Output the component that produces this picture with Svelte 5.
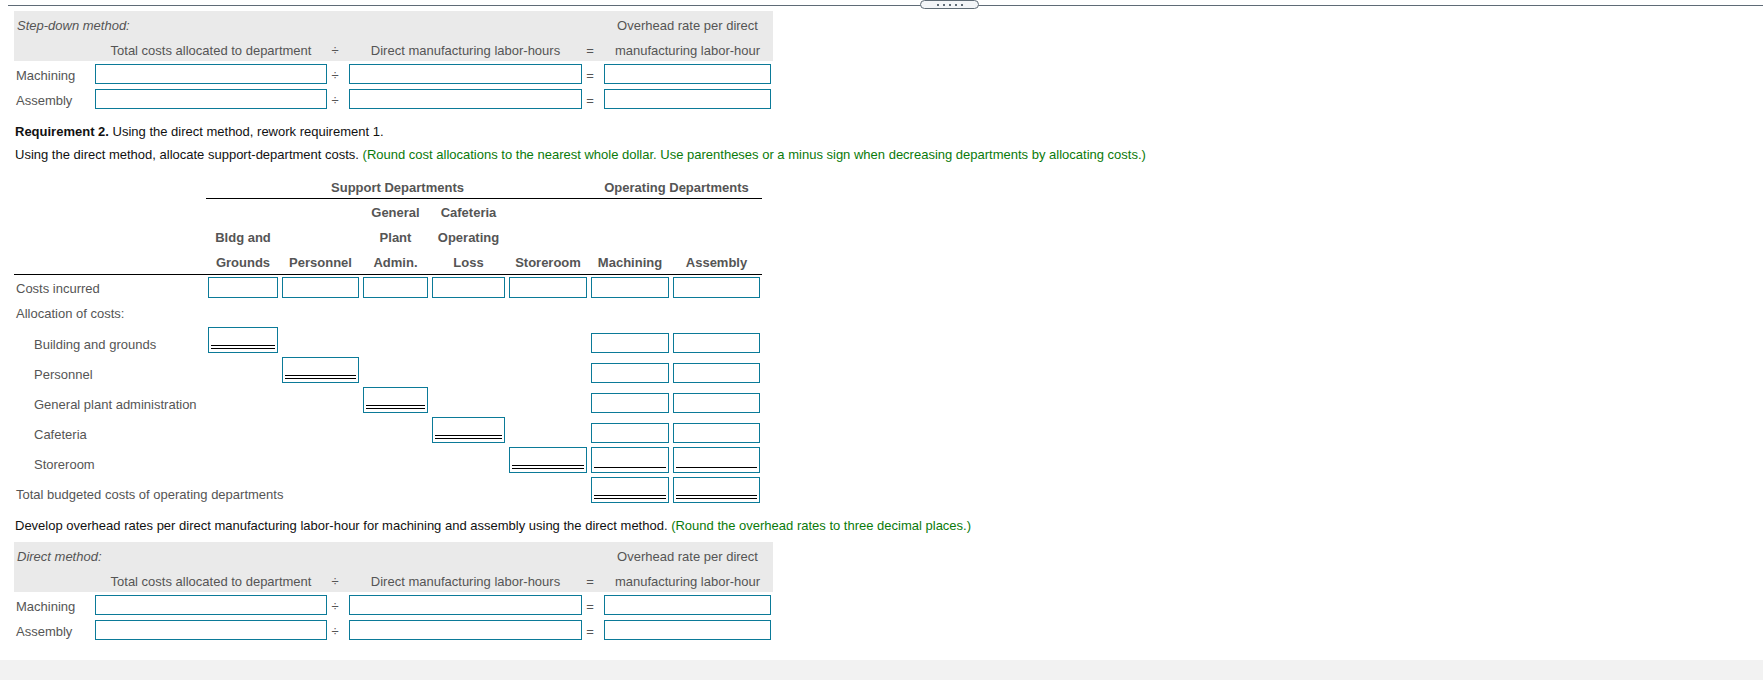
<script lang="ts">
	const rateRows = [
		{ name: 'Machining' },
		{ name: 'Assembly' }
	];

	// rule: '' plain box, 'single' subtotal line, 'double' total line
	const allocRows = [
		{ label: 'Building and grounds', own: 0, rule: 'double', opRule: '' },
		{ label: 'Personnel', own: 1, rule: 'double', opRule: '' },
		{ label: 'General plant administration', own: 2, rule: 'double', opRule: '' },
		{ label: 'Cafeteria', own: 3, rule: 'double', opRule: '' },
		{ label: 'Storeroom', own: 4, rule: 'double', opRule: 'single' }
	];

	const columns = [
		['', 'Bldg and', 'Grounds'],
		['', '', 'Personnel'],
		['General', 'Plant', 'Admin.'],
		['Cafeteria', 'Operating', 'Loss'],
		['', '', 'Storeroom'],
		['', '', 'Machining'],
		['', '', 'Assembly']
	];
</script>

{#snippet rateTable(title: string)}
	<div class="rate-table">
		<div class="rate-head">
			<div class="rate-title">{title}</div>
			<div class="center">Overhead rate per direct</div>
			<div></div>
			<div class="center">Total costs allocated to department</div>
			<div class="center op">÷</div>
			<div class="center">Direct manufacturing labor-hours</div>
			<div class="center op">=</div>
			<div class="center">manufacturing labor-hour</div>
		</div>
		{#each rateRows as row}
			<div class="rate-row">
				<div class="label">{row.name}</div>
				<input class="box rate-input" type="text" />
				<div class="center op">÷</div>
				<input class="box rate-input" type="text" />
				<div class="center op">=</div>
				<input class="box rate-input" type="text" />
			</div>
		{/each}
	</div>
{/snippet}

{#snippet ruledBox(rule: string)}
	<div class="box ruled">
		<input type="text" />
		<span class="rule {rule}"></span>
	</div>
{/snippet}

<div class="page">
	<div class="divider">
		<div class="pill">
			<i></i><i></i><i></i><i></i><i></i>
		</div>
	</div>

	{@render rateTable('Step-down method:')}

	<p class="req first"><b>Requirement 2.</b> Using the direct method, rework requirement 1.</p>
	<p class="req">
		Using the direct method, allocate support-department costs.
		<span class="hint">(Round cost allocations to the nearest whole dollar. Use parentheses or a minus sign when decreasing departments by allocating costs.)</span>
	</p>

	<div class="alloc">
		<div class="group-row">
			<div class="group support">Support Departments</div>
			<div class="group operating">Operating Departments</div>
		</div>

		<div class="head-row">
			<div></div>
			{#each columns as col}
				<div class="head-cell">
					{#each col as line}
						<div class="head-line">{line}</div>
					{/each}
				</div>
			{/each}
		</div>

		<div class="alloc-row short">
			<div class="label">Costs incurred</div>
			{#each columns as _}
				<input class="box cost-input" type="text" />
			{/each}
		</div>

		<div class="alloc-row short">
			<div class="label">Allocation of costs:</div>
		</div>

		{#each allocRows as row}
			<div class="alloc-row tall">
				<div class="label indent">{row.label}</div>
				{#each [0, 1, 2, 3, 4] as col}
					{#if col === row.own}
						<div class="slot">{@render ruledBox(row.rule)}</div>
					{:else}
						<div></div>
					{/if}
				{/each}
				{#each [5, 6] as _}
					{#if row.opRule}
						<div class="slot">{@render ruledBox(row.opRule)}</div>
					{:else}
						<div class="slot"><input class="box op-input" type="text" /></div>
					{/if}
				{/each}
			</div>
		{/each}

		<div class="alloc-row tall">
			<div class="label total">Total budgeted costs of operating departments</div>
			<div class="slot op-col1">{@render ruledBox('double')}</div>
			<div class="slot">{@render ruledBox('double')}</div>
		</div>
	</div>

	<p class="req develop">
		Develop overhead rates per direct manufacturing labor-hour for machining and assembly using the direct method.
		<span class="hint">(Round the overhead rates to three decimal places.)</span>
	</p>

	{@render rateTable('Direct method:')}

	<div class="footer-band"></div>
</div>

<style>
	:global(body) {
		background: #fff;
	}

	.page {
		font-family: 'Liberation Sans', Arial, sans-serif;
		font-size: 13px;
		color: #555;
		position: relative;
		height: 680px;
		overflow: hidden;
	}

	.divider {
		margin: 5px 0 0 8px;
		height: 5px;
		border-top: 1px solid #5f6b76;
	}

	.pill {
		position: absolute;
		top: 0;
		left: 920px;
		width: 59px;
		height: 9px;
		box-sizing: border-box;
		background: #f3f5f8;
		border: 1px solid #5f6b76;
		border-radius: 5px;
		display: flex;
		align-items: center;
		justify-content: center;
		gap: 4px;
	}

	.pill i {
		width: 2px;
		height: 2px;
		background: #5f6b76;
	}

	.rate-table {
		margin-left: 14px;
		width: 759px;
	}

	.rate-head,
	.rate-row {
		display: grid;
		grid-template-columns: 81px 232px 22px 233px 22px 167px;
	}

	.rate-head {
		background: #eaeaea;
		grid-template-rows: 25px 25px;
		line-height: 29px;
	}

	.rate-title {
		grid-column: 1 / 6;
		font-style: italic;
		padding-left: 3px;
	}

	.center {
		text-align: center;
		white-space: nowrap;
	}

	.op {
		padding-right: 6px;
	}

	.rate-row {
		height: 25px;
		line-height: 29px;
	}

	.label {
		padding-left: 2px;
		white-space: nowrap;
	}

	.box {
		box-sizing: border-box;
		border: 1px solid #0b7a98;
		border-radius: 0;
		background: #fff;
		padding: 0;
		margin: 0;
		min-width: 0;
		width: 100%;
		outline: none;
	}

	.rate-input {
		height: 20px;
		margin-top: 3px;
	}

	.req {
		margin: 0;
		line-height: 24px;
		padding-left: 15px;
		color: #111;
		white-space: nowrap;
	}

	.req.first {
		margin-top: 9px;
		margin-bottom: -1px;
	}

	.hint {
		color: #0a7a0a;
	}

	.alloc {
		margin: 8px 0 0 14px;
		width: 748px;
		font-weight: 400;
	}

	.group-row {
		margin-left: 192px;
		display: grid;
		grid-template-columns: 385px 171px;
		height: 23px;
		border-bottom: 1px solid #000;
		font-weight: 700;
		line-height: 25px;
		text-align: center;
	}

	.group.support {
		padding-right: 2px;
	}

	.head-row,
	.alloc-row {
		display: grid;
		grid-template-columns: 190px 70px 77px 65px 73px 78px 78px 87px;
		column-gap: 4px;
	}

	.head-row {
		border-bottom: 1px solid #000;
		font-weight: 700;
		text-align: center;
	}

	.head-cell {
		white-space: nowrap;
	}

	.head-line {
		height: 25px;
		line-height: 27px;
	}

	.alloc-row.short {
		height: 25px;
		line-height: 27px;
	}

	.alloc-row.tall {
		height: 30px;
		line-height: 40px;
	}

	.cost-input {
		height: 21px;
		margin-top: 2px;
	}

	.indent {
		padding-left: 20px;
	}

	.total {
		grid-column: 1 / 7;
	}

	.op-col1 {
		grid-column: 7;
	}

	.slot {
		display: flex;
		align-items: flex-end;
		height: 28px;
	}

	.op-input {
		height: 20px;
	}

	.ruled {
		display: flex;
		flex-direction: column;
		height: 26px;
		padding: 0 2px;
	}

	.ruled input {
		flex: 1;
		min-height: 0;
		min-width: 0;
		width: 100%;
		border: 0;
		padding: 0;
		outline: none;
		background: transparent;
	}

	.rule {
		display: block;
	}

	.rule.double {
		border-bottom: 4px double #000;
		margin-bottom: 3px;
	}

	.rule.single {
		border-bottom: 1px solid #000;
		margin-bottom: 4px;
	}

	.develop {
		margin-top: 9px;
		margin-bottom: 4px;
	}

	.footer-band {
		margin-top: 18px;
		height: 20px;
		background: #f2f2f2;
	}
</style>
